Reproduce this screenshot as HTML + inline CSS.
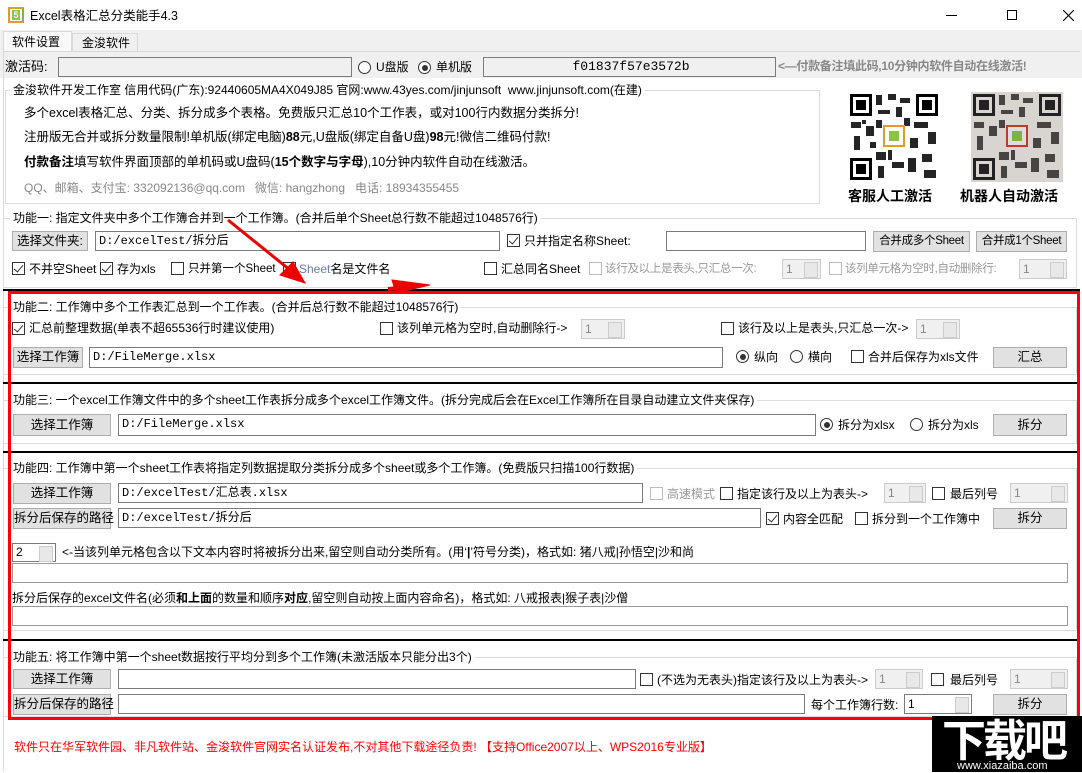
<!DOCTYPE html>
<html><head><meta charset="utf-8"><style>
*{box-sizing:border-box;margin:0;padding:0}
body{width:1082px;height:772px;overflow:hidden;background:#fff;position:relative;font-family:"Liberation Sans","Noto Sans CJK SC",sans-serif;font-size:12px;color:#000}
div,span{position:absolute;white-space:nowrap}
.t{line-height:14px}
.in{background:#fff;border:1px solid #7a7a7a;font-family:"Liberation Mono","Noto Sans CJK SC",monospace;font-size:12px;padding-left:3px;line-height:18px}
.bt{background:#e1e1e1;border:1px solid #adadad;text-align:center;font-size:12.5px}
.cb{width:13px;height:13px;border:1px solid #333;background:#fff}
.cb.on::after{content:"";position:absolute;left:3px;top:0px;width:4px;height:8px;border:solid #333;border-width:0 1.5px 1.5px 0;transform:rotate(40deg)}
.cb.dis{border-color:#bcbcbc}
.rb{width:13px;height:13px;border:1px solid #333;border-radius:50%;background:#fff}
.rb.on::after{content:"";position:absolute;left:2.5px;top:2.5px;width:6px;height:6px;border-radius:50%;background:#333}
.sp{background:#f0f0f0;border:1px solid #ccc;color:#888;font-size:12px;padding-left:3px;line-height:18px}
.sp::after{content:"";position:absolute;right:2px;top:2px;width:12px;height:14px;border:1px solid #ccc;background:#e8e8e8}
.sp.w{background:#fff;border-color:#7a7a7a;color:#000}
.grp{border:1px solid #dcdcdc}
.blk{height:2px;background:#000}
.dis{color:#999}
</style></head><body>
<div style="left:8px;top:7px;width:16px;height:16px;border:2px solid #e39a2b;border-right-color:#7bb84a;"></div>
<div style="left:12px;top:10px;width:8px;height:10px;background:#8cc63f;color:#fff;font-size:9px;line-height:10px;text-align:center;font-weight:bold">5</div>
<div class="t" style="left:30px;top:9px;font-size:12.5px">Excel表格汇总分类能手4.3</div>
<div style="left:946px;top:15px;width:11px;height:1px;background:#000"></div>
<div style="left:1007px;top:10px;width:10px;height:10px;border:1px solid #000"></div>
<svg style="position:absolute;left:1063px;top:10px" width="11" height="11"><path d="M0 0L11 11M11 0L0 11" stroke="#000" stroke-width="1.1"/></svg>
<div style="left:0;top:30px;width:1082px;height:48px;background:#f0f0f0"></div>
<div style="left:3px;top:31px;width:69px;height:20px;background:#f9f9f9;border:1px solid #d9d9d9;border-bottom:none"></div>
<div class="t" style="left:12px;top:35px">软件设置</div>
<div style="left:72px;top:33px;width:66px;height:18px;background:#f0f0f0;border:1px solid #d9d9d9;border-bottom:none"></div>
<div class="t" style="left:82px;top:36px">金浚软件</div>
<div style="left:3px;top:51px;width:1077px;height:1px;background:#d9d9d9"></div>
<div style="left:3px;top:51px;width:1px;height:720px;background:#d9d9d9"></div>
<div class="t" style="left:5px;top:60px;font-size:13px">激活码:</div>
<div class="in" style="left:58px;top:57px;width:294px;height:20px;background:#f0f0f0"></div>
<div class="rb" style="left:358px;top:61px"></div><div class="t" style="left:376px;top:60px">U盘版</div>
<div class="rb on" style="left:418px;top:61px"></div><div class="t" style="left:436px;top:60px">单机版</div>
<div class="in" style="left:483px;top:57px;width:293px;height:20px;background:#f0f0f0;text-align:center;font-size:13px">f01837f57e3572b</div>
<div class="t" style="left:778px;top:59px;color:#888;font-weight:bold;font-size:12px;letter-spacing:-0.3px">&lt;—付款备注填此码,10分钟内软件自动在线激活!</div>
<div class="grp" style="left:5px;top:90px;width:815px;height:114px"></div>
<div class="t" style="left:10px;top:83px;background:#fff;padding:0 3px;font-size:12px">金浚软件开发工作室 信用代码(广东):92440605MA4X049J85 官网:www.43yes.com/jinjunsoft&nbsp; www.jinjunsoft.com(在建)</div>
<div class="t" style="left:24px;top:106px;font-size:12.5px">多个excel表格汇总、分类、拆分成多个表格。免费版只汇总10个工作表，或对100行内数据分类拆分!</div>
<div class="t" style="left:24px;top:130px;font-size:12.5px">注册版无合并或拆分数量限制!单机版(绑定电脑)<b>88</b>元,U盘版(绑定自备U盘)<b>98</b>元!微信二维码付款!</div>
<div class="t" style="left:24px;top:155px;font-size:12.5px"><b>付款备注</b>填写软件界面顶部的单机码或U盘码(<b>15个数字与字母</b>),10分钟内软件自动在线激活。</div>
<div class="t" style="left:24px;top:181px;color:#888;font-size:12px">QQ、邮箱、支付宝: 332092136@qq.com&nbsp;&nbsp; 微信: hangzhong&nbsp;&nbsp; 电话: 18934355455</div>
<svg style="position:absolute;left:848px;top:92px" width="92" height="90" viewBox="0 0 92 90"><rect width="92" height="90" fill="#fff"/><g fill="#000"><rect x="2" y="2" width="22" height="22"/><rect x="68" y="2" width="22" height="22"/><rect x="2" y="66" width="22" height="22"/></g><g fill="#fff"><rect x="5" y="5" width="16" height="16"/><rect x="71" y="5" width="16" height="16"/><rect x="5" y="69" width="16" height="16"/></g><g fill="#000"><rect x="8" y="8" width="10" height="10"/><rect x="74" y="8" width="10" height="10"/><rect x="8" y="72" width="10" height="10"/></g><g fill="#000" opacity=".85"><rect x="28" y="3" width="6" height="10"/><rect x="40" y="2" width="8" height="6"/><rect x="52" y="6" width="10" height="5"/><rect x="30" y="18" width="12" height="4"/><rect x="48" y="15" width="6" height="10"/><rect x="3" y="30" width="10" height="6"/><rect x="18" y="34" width="8" height="10"/><rect x="6" y="44" width="6" height="14"/><rect x="28" y="28" width="6" height="8"/><rect x="66" y="30" width="14" height="6"/><rect x="80" y="40" width="8" height="12"/><rect x="62" y="46" width="8" height="10"/><rect x="28" y="60" width="10" height="8"/><rect x="30" y="74" width="6" height="12"/><rect x="44" y="70" width="12" height="6"/><rect x="60" y="66" width="8" height="14"/><rect x="74" y="62" width="10" height="8"/><rect x="76" y="78" width="12" height="8"/><rect x="22" y="50" width="6" height="6"/><rect x="56" y="26" width="6" height="8"/><rect x="40" y="58" width="4" height="10"/><rect x="14" y="28" width="4" height="4"/></g><rect x="36" y="34" width="20" height="20" fill="#fff" stroke="#e39a2b" stroke-width="2"/><rect x="41" y="39" width="10" height="10" fill="#8cc63f"/></svg>
<svg style="position:absolute;left:971px;top:92px" width="92" height="90" viewBox="0 0 92 90"><rect width="92" height="90" fill="#d8d4d0"/><g fill="#222"><rect x="2" y="2" width="22" height="22"/><rect x="68" y="2" width="22" height="22"/><rect x="2" y="66" width="22" height="22"/></g><g fill="#d8d4d0"><rect x="5" y="5" width="16" height="16"/><rect x="71" y="5" width="16" height="16"/><rect x="5" y="69" width="16" height="16"/></g><g fill="#222"><rect x="8" y="8" width="10" height="10"/><rect x="74" y="8" width="10" height="10"/><rect x="8" y="72" width="10" height="10"/></g><g fill="#222" opacity=".8"><rect x="28" y="3" width="6" height="10"/><rect x="40" y="2" width="8" height="6"/><rect x="52" y="6" width="10" height="5"/><rect x="30" y="18" width="12" height="4"/><rect x="48" y="15" width="6" height="10"/><rect x="3" y="30" width="10" height="6"/><rect x="18" y="34" width="8" height="10"/><rect x="6" y="44" width="6" height="14"/><rect x="28" y="28" width="6" height="8"/><rect x="66" y="30" width="14" height="6"/><rect x="80" y="40" width="8" height="12"/><rect x="62" y="46" width="8" height="10"/><rect x="28" y="60" width="10" height="8"/><rect x="30" y="74" width="6" height="12"/><rect x="44" y="70" width="12" height="6"/><rect x="60" y="66" width="8" height="14"/><rect x="74" y="62" width="10" height="8"/><rect x="76" y="78" width="12" height="8"/><rect x="40" y="58" width="4" height="10"/></g><rect x="36" y="34" width="20" height="20" fill="#ddd" stroke="#c0392b" stroke-width="2"/><rect x="41" y="39" width="10" height="10" fill="#7cb342"/></svg>
<div class="t" style="left:848px;top:189px;font-size:14px;font-weight:bold">客服人工激活</div>
<div class="t" style="left:960px;top:189px;font-size:14px;font-weight:bold">机器人自动激活</div>
<div class="grp" style="left:3px;top:218px;width:1074px;height:70px"></div>
<div class="t" style="left:10px;top:211px;background:#fff;padding:0 3px">功能一: 指定文件夹中多个工作簿合并到一个工作簿。(合并后单个Sheet总行数不能超过1048576行)</div>
<div class="bt" style="left:12px;top:231px;width:76px;height:20px;line-height:18px">选择文件夹:</div>
<div class="in" style="left:95px;top:231px;width:405px;height:20px">D:/excelTest/拆分后</div>
<div class="cb on" style="left:507px;top:234px"></div><div class="t" style="left:524px;top:234px">只并指定名称Sheet:</div>
<div class="in" style="left:666px;top:231px;width:200px;height:20px"></div>
<div class="bt" style="left:873px;top:231px;width:97px;height:21px;line-height:19px;font-size:11.5px;letter-spacing:-0.3px">合并成多个Sheet</div>
<div class="bt" style="left:976px;top:231px;width:91px;height:21px;line-height:19px;font-size:11.5px;letter-spacing:-0.3px">合并成1个Sheet</div>
<div class="cb on" style="left:12px;top:262px"></div><div class="t" style="left:29px;top:262px">不并空Sheet</div>
<div class="cb on" style="left:100px;top:262px"></div><div class="t" style="left:117px;top:262px">存为xls</div>
<div class="cb" style="left:171px;top:262px"></div><div class="t" style="left:188px;top:262px;font-size:11.5px">只并第一个Sheet</div>
<div class="cb" style="left:283px;top:262px"></div><div class="t" style="left:299px;top:262px"><span style="position:static;color:#6a7ab0">Sheet</span>名是文件名</div>
<div class="cb" style="left:484px;top:262px"></div><div class="t" style="left:501px;top:262px">汇总同名Sheet</div>
<div class="cb dis" style="left:589px;top:262px"></div><div class="t dis" style="left:605px;top:262px;font-size:11.5px;letter-spacing:-0.3px">该行及以上是表头,只汇总一次:</div>
<div class="sp" style="left:782px;top:259px;width:39px;height:20px">1</div>
<div class="cb dis" style="left:829px;top:262px"></div><div class="t dis" style="left:845px;top:262px;font-size:11.5px;letter-spacing:-0.3px">该列单元格为空时,自动删除行:</div>
<div class="sp" style="left:1019px;top:259px;width:48px;height:20px">1</div>
<div class="blk" style="left:3px;top:289px;width:1077px"></div>
<div class="grp" style="left:3px;top:307px;width:1074px;height:68px"></div>
<div class="t" style="left:10px;top:300px;background:#fff;padding:0 3px">功能二: 工作簿中多个工作表汇总到一个工作表。(合并后总行数不能超过1048576行)</div>
<div class="cb on" style="left:12px;top:322px"></div><div class="t" style="left:29px;top:321px">汇总前整理数据(单表不超65536行时建议使用)</div>
<div class="cb" style="left:380px;top:322px"></div><div class="t" style="left:397px;top:321px">该列单元格为空时,自动删除行-&gt;</div>
<div class="sp" style="left:581px;top:319px;width:44px;height:20px">1</div>
<div class="cb" style="left:721px;top:322px"></div><div class="t" style="left:738px;top:321px">该行及以上是表头,只汇总一次-&gt;</div>
<div class="sp" style="left:916px;top:319px;width:44px;height:20px">1</div>
<div class="bt" style="left:13px;top:347px;width:70px;height:21px;line-height:19px">选择工作簿</div>
<div class="in" style="left:89px;top:347px;width:634px;height:21px">D:/FileMerge.xlsx</div>
<div class="rb on" style="left:736px;top:350px"></div><div class="t" style="left:754px;top:350px">纵向</div>
<div class="rb" style="left:790px;top:350px"></div><div class="t" style="left:808px;top:350px">横向</div>
<div class="cb" style="left:851px;top:350px"></div><div class="t" style="left:868px;top:350px">合并后保存为xls文件</div>
<div class="bt" style="left:993px;top:347px;width:74px;height:21px;line-height:19px">汇总</div>
<div class="blk" style="left:3px;top:382px;width:1077px"></div>
<div class="grp" style="left:3px;top:400px;width:1074px;height:44px"></div>
<div class="t" style="left:10px;top:393px;background:#fff;padding:0 3px">功能三: 一个excel工作簿文件中的多个sheet工作表拆分成多个excel工作簿文件。(拆分完成后会在Excel工作簿所在目录自动建立文件夹保存)</div>
<div class="bt" style="left:13px;top:414px;width:98px;height:22px;line-height:20px">选择工作簿</div>
<div class="in" style="left:118px;top:414px;width:698px;height:22px">D:/FileMerge.xlsx</div>
<div class="rb on" style="left:820px;top:418px"></div><div class="t" style="left:838px;top:418px">拆分为xlsx</div>
<div class="rb" style="left:910px;top:418px"></div><div class="t" style="left:928px;top:418px">拆分为xls</div>
<div class="bt" style="left:993px;top:414px;width:74px;height:22px;line-height:20px">拆分</div>
<div class="blk" style="left:3px;top:451px;width:1077px"></div>
<div class="grp" style="left:3px;top:468px;width:1074px;height:163px"></div>
<div class="t" style="left:10px;top:461px;background:#fff;padding:0 3px">功能四: 工作簿中第一个sheet工作表将指定列数据提取分类拆分成多个sheet或多个工作簿。(免费版只扫描100行数据)</div>
<div class="bt" style="left:13px;top:483px;width:98px;height:21px;line-height:19px">选择工作簿</div>
<div class="in" style="left:118px;top:483px;width:525px;height:20px">D:/excelTest/汇总表.xlsx</div>
<div class="cb dis" style="left:650px;top:487px"></div><div class="t dis" style="left:667px;top:487px">高速模式</div>
<div class="cb" style="left:720px;top:487px"></div><div class="t" style="left:737px;top:487px">指定该行及以上为表头-&gt;</div>
<div class="sp" style="left:884px;top:483px;width:42px;height:20px">1</div>
<div class="cb" style="left:932px;top:487px"></div><div class="t" style="left:950px;top:487px">最后列号</div>
<div class="sp" style="left:1010px;top:483px;width:58px;height:20px">1</div>
<div class="bt" style="left:13px;top:508px;width:98px;height:21px;line-height:19px">拆分后保存的路径</div>
<div class="in" style="left:118px;top:508px;width:643px;height:20px">D:/excelTest/拆分后</div>
<div class="cb on" style="left:766px;top:512px"></div><div class="t" style="left:783px;top:512px">内容全匹配</div>
<div class="cb" style="left:855px;top:512px"></div><div class="t" style="left:872px;top:512px">拆分到一个工作簿中</div>
<div class="bt" style="left:993px;top:508px;width:74px;height:21px;line-height:19px">拆分</div>
<div class="sp w" style="left:12px;top:543px;width:44px;height:19px;line-height:17px">2</div>
<div class="t" style="left:62px;top:545px">&lt;-当该列单元格包含以下文本内容时将被拆分出来,留空则自动分类所有。(用‘<b>|</b>’符号分类)，格式如: 猪八戒|孙悟空|沙和尚</div>
<div class="in" style="left:12px;top:563px;width:1056px;height:20px;border-color:#999"></div>
<div class="t" style="left:12px;top:591px">拆分后保存的excel文件名(必须<b>和上面</b>的数量和顺序<b>对应</b>,留空则自动按上面内容命名)，格式如: 八戒报表|猴子表|沙僧</div>
<div class="in" style="left:12px;top:606px;width:1056px;height:20px;border-color:#999"></div>
<div class="blk" style="left:3px;top:639px;width:1077px"></div>
<div class="grp" style="left:3px;top:657px;width:1074px;height:60px"></div>
<div class="t" style="left:10px;top:650px;background:#fff;padding:0 3px">功能五: 将工作簿中第一个sheet数据按行平均分到多个工作簿(未激活版本只能分出3个)</div>
<div class="bt" style="left:13px;top:669px;width:98px;height:20px;line-height:18px">选择工作簿</div>
<div class="in" style="left:118px;top:669px;width:518px;height:20px"></div>
<div class="cb" style="left:640px;top:673px"></div><div class="t" style="left:657px;top:673px">(不选为无表头)指定该行及以上为表头-&gt;</div>
<div class="sp" style="left:875px;top:669px;width:48px;height:20px">1</div>
<div class="cb" style="left:931px;top:673px"></div><div class="t" style="left:950px;top:673px">最后列号</div>
<div class="sp" style="left:1010px;top:669px;width:58px;height:20px">1</div>
<div class="bt" style="left:13px;top:694px;width:98px;height:21px;line-height:19px">拆分后保存的路径</div>
<div class="in" style="left:118px;top:694px;width:687px;height:20px"></div>
<div class="t" style="left:811px;top:698px">每个工作簿行数:</div>
<div class="sp w" style="left:904px;top:694px;width:68px;height:20px">1</div>
<div class="bt" style="left:993px;top:694px;width:74px;height:21px;line-height:19px">拆分</div>
<div style="left:8px;top:291px;width:1072px;height:429px;border:3px solid #f00"></div>
<svg style="position:absolute;left:0;top:0" width="1082" height="772"><g fill="#e00" stroke="#e00"><line x1="228" y1="220" x2="290" y2="270" stroke-width="3"/><polygon points="305,283 280,275 293,262"/><line x1="388" y1="289" x2="410" y2="287" stroke-width="4"/><polygon points="430,285 392,280 396,293"/></g></svg>
<div class="t" style="left:14px;top:740px;color:#f00;font-size:12px">软件只在华军软件园、非凡软件站、金浚软件官网实名认证发布,不对其他下载途径负责! 【支持Office2007以上、WPS2016专业版】</div>
<div style="left:932px;top:716px;width:150px;height:56px;background:#000"></div>
<div class="t" style="left:942px;top:712px;color:#fff;font-size:44px;font-weight:bold;line-height:50px;letter-spacing:-3px;font-family:'Noto Sans CJK SC',sans-serif">下载吧</div>
<div class="t" style="left:957px;top:759px;color:#fff;font-size:11px">www.xiazaiba.com</div>
</body></html>
